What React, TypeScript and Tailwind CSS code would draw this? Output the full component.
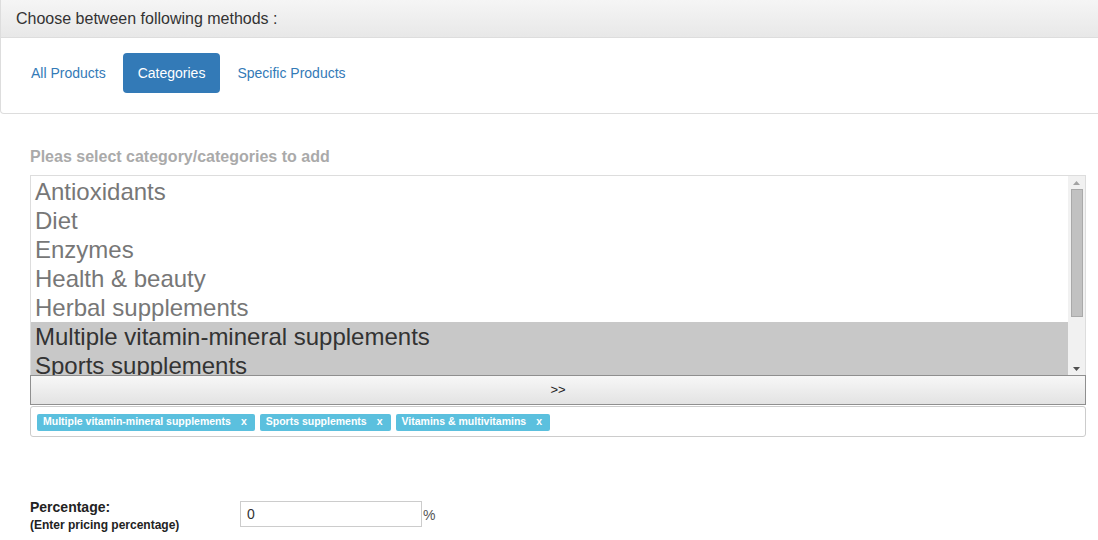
import React from 'react';

const categories = [
  { name: 'Antioxidants', selected: false },
  { name: 'Diet', selected: false },
  { name: 'Enzymes', selected: false },
  { name: 'Health & beauty', selected: false },
  { name: 'Herbal supplements', selected: false },
  { name: 'Multiple vitamin-mineral supplements', selected: true },
  { name: 'Sports supplements', selected: true },
  { name: 'Vitamins & multivitamins', selected: true },
];

const tags = ['Multiple vitamin-mineral supplements', 'Sports supplements', 'Vitamins & multivitamins'];

const App = () => {
  return (
    <div className="w-[1098px] h-[540px] overflow-hidden bg-white text-[#333] font-['Liberation_Sans',Arial,sans-serif]">
      {/* methods panel */}
      <div className="w-[1110px] border border-[#ddd] border-t-0 rounded-bl-[4px]">
        <div className="h-[38px] pl-[15px] flex items-center text-[16px] bg-gradient-to-b from-[#f5f5f5] to-[#e8e8e8] border-b border-[#ddd]">
          Choose between following methods :
        </div>
        <div className="flex gap-[2px] pl-[15px] pt-[15px] pb-[20px] text-[14px]">
          <a className="h-[40px] px-[15px] flex items-center text-[#337ab7] rounded-[4px]">All Products</a>
          <a className="h-[40px] px-[15px] flex items-center text-white bg-[#337ab7] rounded-[4px]">Categories</a>
          <a className="h-[40px] px-[15px] flex items-center text-[#337ab7] rounded-[4px]">Specific Products</a>
        </div>
      </div>

      <div className="pl-[30px] w-[1086px]">
        <div className="mt-[33px] text-[16px] font-bold text-[#aaa] leading-[20px]">
          Pleas select category/categories to add
        </div>

        {/* category list */}
        <div className="mt-[8px] h-[200px] border border-[#ddd] border-b-0 flex overflow-hidden">
          <div className="flex-1 pt-[1px] overflow-hidden">
            {categories.map((c) => (
              <div
                key={c.name}
                className={`h-[29px] leading-[29px] pl-[4px] text-[24px] whitespace-nowrap ${c.selected ? 'bg-[#c8c8c8] text-[#333]' : 'text-[#777]'}`}
              >
                {c.name}
              </div>
            ))}
          </div>
          <div className="w-[17px] bg-[#f1f1f1] flex flex-col items-center">
            <div className="h-[13px] flex items-center justify-center">
              <svg width="7" height="4" viewBox="0 0 7 4"><path d="M3.5 0L7 4H0z" fill="#a3a3a3" /></svg>
            </div>
            <div className="w-[12px] h-[128px] bg-[#c1c1c1] border border-[#a9a9a9]" />
            <div className="flex-1" />
            <div className="h-[13px] flex items-center justify-center">
              <svg width="7" height="4" viewBox="0 0 7 4"><path d="M0 0H7L3.5 4z" fill="#505050" /></svg>
            </div>
          </div>
        </div>

        <button className="w-full h-[30px] border border-[#8f8f8f] bg-gradient-to-b from-[#f7f7f7] to-[#e3e3e3] text-[13px] text-[#222] flex items-center justify-center">
          &gt;&gt;
        </button>

        <div className="mt-[1px] h-[31px] pt-[1px] border border-[#ccc] rounded-[3px] flex items-center gap-[5px] pl-[6px]">
          {tags.map((t) => (
            <span
              key={t}
              className="h-[17px] pl-[6px] pr-[8px] flex items-center gap-[10px] bg-[#5bc0de] text-white text-[10.5px] font-bold rounded-[2px] whitespace-nowrap"
            >
              {t}
              <span>x</span>
            </span>
          ))}
        </div>

        {/* percentage */}
        <div className="mt-[62px] flex">
          <div className="w-[210px]">
            <div className="text-[14px] font-bold text-[#222] leading-[17px]">Percentage:</div>
            <div className="mt-[2px] text-[12px] font-bold text-[#222] leading-[15px]">(Enter pricing percentage)</div>
          </div>
          <div className="flex items-start pt-[2px]">
            <input
              readOnly
              value="0"
              className="w-[182px] h-[26px] border border-[#ccc] px-[6px] text-[14px] text-[#333] outline-none"
            />
            <span className="ml-[1px] mt-[4px] text-[14px] text-[#555]">%</span>
          </div>
        </div>
      </div>
    </div>
  );
};

export default App;
